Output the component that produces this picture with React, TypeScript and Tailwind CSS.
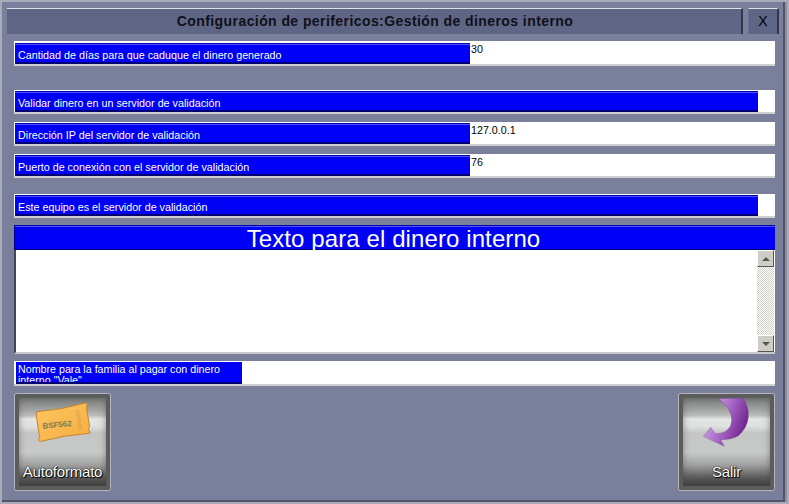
import React from "react";

const FONT = "font-['Liberation_Sans',Arial,sans-serif]";

function Field({ label, value, wide, first, className }: { label: string; value?: string; wide?: boolean; first?: boolean; className?: string }) {
  return (
    <div className={`flex ${first ? "h-[25px]" : "h-[24px]"} w-[761px] bg-white border-b-2 border-b-[#cfcfd2] ${className ?? ""}`}>
      <div
        className={`${wide ? "w-[743px]" : "w-[455px]"} ml-px ${first ? "mt-[2px]" : "mt-px"} h-[21px] bg-[#0000f6] border-t border-t-[#0000b0] shadow-[inset_0_1px_0_#5050ff] border-b-2 border-b-[#000070] text-white text-[10.75px] leading-[22px] pl-[3px] whitespace-nowrap overflow-hidden`}
      >
        {label}
      </div>
      {value && <span className="text-[10.7px] leading-[11px] text-black pl-px mt-[3px]">{value}</span>}
    </div>
  );
}

function BigButton({ label, children }: { label: string; children: React.ReactNode }) {
  return (
    <div className="w-[97px] h-[98px] rounded-[2px] border border-[#b4b4bc] bg-[#5c5c5c] p-[4px]">
      <div className="flex flex-col items-center h-[88px] w-[87px] shadow-[inset_0_0_7px_rgba(70,70,70,0.55)] bg-[linear-gradient(to_bottom,#7c7e7e_0%,#a4a6a6_14%,#bcbebe_20%,#e4e6e6_24%,#dfe1e1_32%,#c4c6c6_40%,#c8caca_62%,#a0a0a0_76%,#5c5c5c_90%,#3e3e3e_100%)]">
        <div className="h-[60px] flex items-start justify-center">{children}</div>
        <span className="text-[15px] leading-[16px] mt-[6px] text-white tracking-[-0.2px] [text-shadow:0_0_1px_#000,0_0_1px_#000,1px_1px_1px_#000]">{label}</span>
      </div>
    </div>
  );
}

function ScrollButton({ up }: { up?: boolean }) {
  return (
    <div className="w-[17px] h-[17px] bg-[#cfcdc6] border border-t-white border-l-white border-r-[#555] border-b-[#555] flex items-center justify-center">
      <div className={`w-0 h-0 border-x-[4px] border-x-transparent ${up ? "border-b-[4px] border-b-[#555]" : "border-t-[4px] border-t-[#555]"}`} />
    </div>
  );
}

export default function App() {
  return (
    <div className={`${FONT} w-[789px] h-[504px] bg-[#8c8ea0] border-[2px] border-[#a9abb8] overflow-hidden`}>
      <div className="w-[783px] h-[500px] bg-[#7a7f9b] border-r-2 border-r-[#50536a] border-b-2 border-b-[#50536a]">
        <div className="flex pl-[5px] pt-[6px] gap-[5px] h-[32px]">
          <div className="w-[736px] h-[26px] bg-[#5f6584] border-t border-t-[#e0e2ea] border-r-2 border-r-[#33364a] flex items-center justify-center pl-[2px] text-[14px] font-bold text-[#10101a] tracking-[0.42px]">
            Configuración de perifericos:Gestión de dineros interno
          </div>
          <div className="w-[31px] h-[26px] bg-[#5f6584] border-t border-t-[#e0e2ea] border-r-2 border-r-[#33364a] border-l border-l-[#6a7090] flex items-center justify-center text-[14px] text-black">
            X
          </div>
        </div>
        <div className="pl-[12px] pt-[7px] flex flex-col">
          <Field first label="Cantidad de días para que caduque el dinero generado" value="30" />
          <Field className="mt-[24px]" wide label="Validar dinero en un servidor de validación" />
          <Field className="mt-[8px]" label="Dirección IP del servidor de validación" value="127.0.0.1" />
          <Field className="mt-[8px]" label="Puerto de conexión con el servidor de validación" value="76" />
          <Field className="mt-[16px]" wide label="Este equipo es el servidor de validación" />
          <div className="mt-[7px] w-[761px] h-[25px] bg-[#0000f6] border-t border-t-[#0000b0] shadow-[inset_0_1px_0_#5050ff] border-b border-b-[#000070] border-l border-l-[#000090] text-white text-center text-[24px] leading-[25px] tracking-[0.1px] pr-[3px]">
            Texto para el dinero interno
          </div>
          <div className="w-[761px] h-[104px] bg-white border-l-2 border-l-[#44465a] border-b-2 border-b-[#c8c8c8] flex justify-end">
            <div className="mr-px w-[17px] h-[102px] flex flex-col bg-[repeating-conic-gradient(#d4d0c8_0%_25%,#fff_0%_50%)] bg-[length:2px_2px]">
              <ScrollButton up />
              <div className="flex-1" />
              <ScrollButton />
            </div>
          </div>
          <div className="mt-[7px] w-[761px] h-[25px] bg-white border-b-2 border-b-[#cfcfd2] flex">
            <div className="ml-[2px] mt-px w-[226px] h-[22px] bg-[#0000f6] border-b-2 border-b-[#000070] text-white text-[10.7px] leading-[11px] pl-[2px] pt-[2px] overflow-hidden">
              Nombre para la familia al pagar con dinero interno "Vale"
            </div>
          </div>
          <div className="mt-[7px] w-[761px] flex justify-between">
            <BigButton label="Autoformato">
              <svg width="60" height="44" viewBox="100 60 180 132" className="mt-[2px]">
                <defs>
                  <linearGradient id="ticket" x1="0" y1="0" x2="1" y2="1">
                    <stop offset="0" stopColor="#fdc662" />
                    <stop offset="1" stopColor="#f6ac40" />
                  </linearGradient>
                </defs>
                <path d="M112 95 Q185 90 256 69 Q262 68 263 74 Q258 84 262 92 L270 140 Q262 150 272 156 Q272 160 268 160 Q195 165 124 184 Q118 185 117 179 Q122 170 118 160 L110 108 Q110 100 112 95Z" fill="url(#ticket)" stroke="#c98428" strokeWidth="3" />
                <path d="M233 92 L243 150" stroke="#c99d50" strokeWidth="11" strokeDasharray="3 3" fill="none" opacity="0.75" />
                <text x="129" y="146" fontSize="24" fontWeight="bold" fill="#7f7a50" transform="rotate(-5 129 146)">BSF562</text>
              </svg>
            </BigButton>
            <BigButton label="Salir">
              <svg width="50" height="50" viewBox="30 15 150 150" className="-ml-[3px]">
                <defs>
                  <linearGradient id="arrow" x1="0" y1="0.2" x2="1" y2="0.6">
                    <stop offset="0" stopColor="#d8b8ee" />
                    <stop offset="0.5" stopColor="#a868c8" />
                    <stop offset="1" stopColor="#6a1c88" />
                  </linearGradient>
                </defs>
                <path d="M85 17 L160 15 Q178 45 175 72 Q172 105 145 128 Q125 140 92 140 L103 160 L40 130 L62 103 L76 122 Q110 122 122 98 Q132 70 110 40 Q100 27 85 17Z" fill="url(#arrow)" stroke="#6a4a80" strokeWidth="1" />
              </svg>
            </BigButton>
          </div>
        </div>
      </div>
    </div>
  );
}
